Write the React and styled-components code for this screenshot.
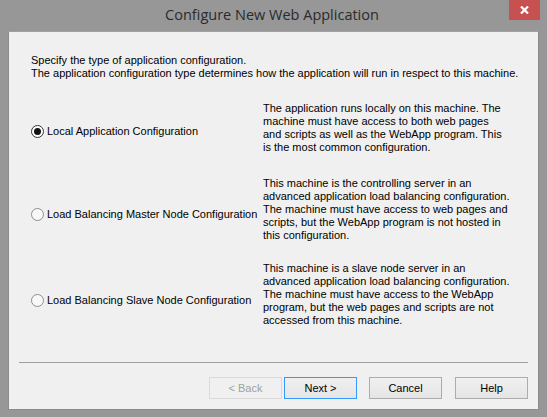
import React from "react";
import styled, { createGlobalStyle } from "styled-components";

const GlobalStyle = createGlobalStyle`
  html, body {
    margin: 0;
    padding: 0;
    background: #979797;
  }
  body {
    font-family: "Liberation Sans", Arial, sans-serif;
    font-size: 11px;
    color: #000;
  }
`;

const Window = styled.div`
  width: 547px;
  height: 417px;
  box-sizing: border-box;
  background: #979797;
  display: flex;
  flex-direction: column;
  padding: 0 8px 7px 8px;
`;

const TitleBar = styled.div`
  height: 31px;
  display: grid;
  grid-template-columns: 1fr auto 1fr;
  margin: 0 -1px 0 -8px;
`;

const Title = styled.div`
  grid-column: 2;
  font-family: "Open Sans", "Noto Sans", sans-serif;
  font-size: 14.5px;
  color: #2b2b2b;
  line-height: 30px;
  padding-left: 4px;
`;

const CloseButton = styled.div`
  grid-column: 3;
  justify-self: end;
  width: 31px;
  height: 20px;
  background: #c75050;
  display: flex;
  align-items: center;
  justify-content: center;
`;

const Panel = styled.div`
  flex: 1;
  background: #f0f0f0;
  border: 1px solid #8c8c8c;
  border-top-color: #a0a0a0;
  display: flex;
  flex-direction: column;
  padding: 22px 10px 10px 10px;
`;

const Intro = styled.div`
  padding-left: 12px;
  line-height: 13px;
`;

const Options = styled.div`
  display: flex;
  flex-direction: column;
  padding-left: 12px;
  margin-top: 10px;
`;

const OptionRow = styled.div`
  display: flex;
  height: ${(p) => p.$height}px;
`;

const RadioLabel = styled.label`
  width: 232px;
  display: flex;
  align-items: center;
  gap: 3px;
  align-self: center;
  margin-top: ${(p) => p.$shift || 0}px;
`;

const Radio = styled.span`
  width: 11px;
  height: 11px;
  border-radius: 50%;
  border: 1px solid ${(p) => (p.$checked ? "#333" : "#8e8e8e")};
  background: ${(p) => (p.$checked ? "#fff" : "#f8f8f8")};
  display: flex;
  align-items: center;
  justify-content: center;
  &::after {
    content: "";
    display: ${(p) => (p.$checked ? "block" : "none")};
    width: 7px;
    height: 7px;
    border-radius: 50%;
    background: #111;
  }
`;

const Description = styled.div`
  padding-top: ${(p) => p.$top}px;
  line-height: 13px;
  display: flex;
  flex-direction: column;
`;

const Separator = styled.div`
  margin-top: auto;
  height: 1px;
  background: #a0a0a0;
  margin-bottom: 14px;
`;

const ButtonRow = styled.div`
  display: flex;
  justify-content: flex-end;
`;

const Button = styled.button`
  width: 73px;
  height: 22px;
  box-sizing: border-box;
  margin-left: ${(p) => p.$gap}px;
  font-family: "Liberation Sans", Arial, sans-serif;
  font-size: 11px;
  padding: 0;
  color: ${(p) => (p.disabled ? "#a0a0a0" : "#000")};
  border: 1px solid
    ${(p) => (p.$default ? "#3399ff" : p.disabled ? "#d9d9d9" : "#acacac")};
  background: ${(p) =>
    p.disabled
      ? "#f0f0f0"
      : "linear-gradient(#f0f0f0, #e5e5e5)"};
`;

const options = [
  {
    label: "Local Application Configuration",
    checked: true,
    height: 78,
    top: 12,
    shift: 4,
    lines: [
      "The application runs locally on this machine. The",
      "machine must have access to both web pages",
      "and scripts as well as the WebApp program. This",
      "is the most common configuration.",
    ],
  },
  {
    label: "Load Balancing Master Node Configuration",
    height: 86,
    top: 9,
    shift: 6,
    lines: [
      "This machine is the controlling server in an",
      "advanced application load balancing configuration.",
      "The machine must have access to web pages and",
      "scripts, but the WebApp program is not hosted in",
      "this configuration.",
    ],
  },
  {
    label: "Load Balancing Slave Node Configuration",
    height: 84,
    top: 8,
    shift: 8,
    lines: [
      "This machine is a slave node server in an",
      "advanced application load balancing configuration.",
      "The machine must have access to the WebApp",
      "program, but the web pages and scripts are not",
      "accessed from this machine.",
    ],
  },
];

export default function App() {
  return (
    <>
      <GlobalStyle />
      <Window>
        <TitleBar>
          <Title>Configure New Web Application</Title>
          <CloseButton>
            <svg width="9" height="8" viewBox="0 0 9 8">
              <path d="M1 0.5 L8 7.5 M8 0.5 L1 7.5" stroke="#fff" strokeWidth="2.2" />
            </svg>
          </CloseButton>
        </TitleBar>
        <Panel>
          <Intro>
            Specify the type of application configuration.
            <br />
            The application configuration type determines how the application
            will run in respect to this machine.
          </Intro>
          <Options>
            {options.map((o) => (
              <OptionRow key={o.label} $height={o.height}>
                <RadioLabel $shift={o.shift}>
                  <Radio $checked={o.checked} />
                  {o.label}
                </RadioLabel>
                <Description $top={o.top}>
                  {o.lines.map((l) => (
                    <span key={l}>{l}</span>
                  ))}
                </Description>
              </OptionRow>
            ))}
          </Options>
          <Separator />
          <ButtonRow>
            <Button disabled $gap={0}>&lt; Back</Button>
            <Button $default $gap={2}>Next &gt;</Button>
            <Button $gap={12}>Cancel</Button>
            <Button $gap={13}>Help</Button>
          </ButtonRow>
        </Panel>
      </Window>
    </>
  );
}
